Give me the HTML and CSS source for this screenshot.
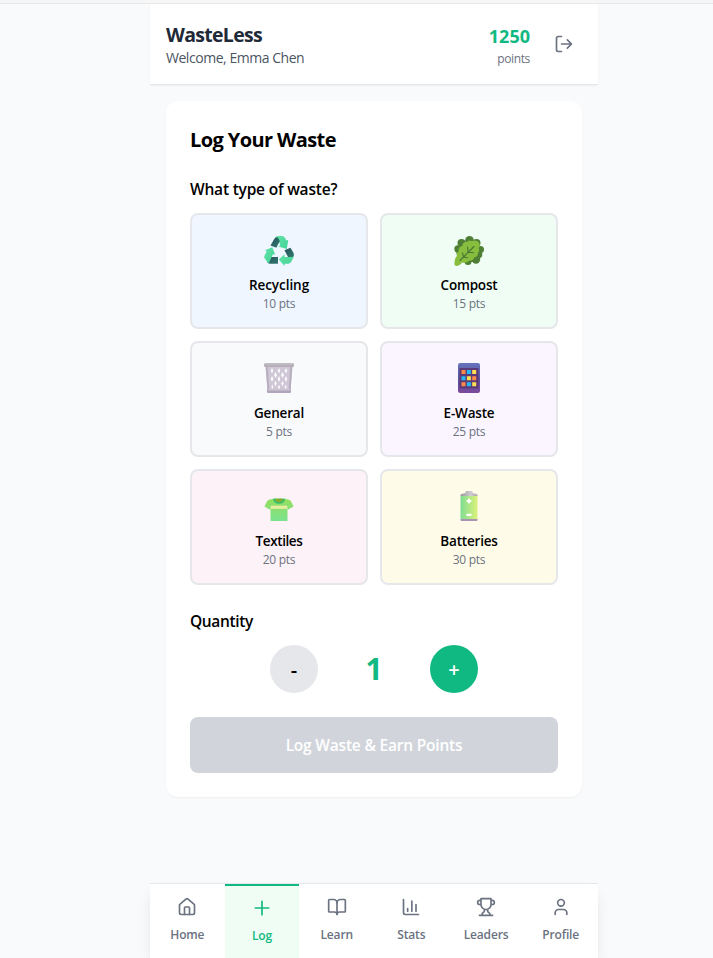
FILE: index.html
```html
<!DOCTYPE html>
<html lang="en">
<head>
<meta charset="utf-8">
<title>WasteLess</title>
<link rel="stylesheet" href="styles.css">
</head>
<body>
<div class="topline"></div>
<div class="app">
  <header class="header">
    <div>
      <h1 class="brand">WasteLess</h1>
      <p class="welcome">Welcome, Emma Chen</p>
    </div>
    <div class="account">
      <div class="score">
        <div class="score-value">1250</div>
        <div class="score-label">points</div>
      </div>
      <button class="logout" aria-label="Log out">
        <svg class="icon" viewBox="0 0 24 24"><path d="M9 21H5a2 2 0 0 1-2-2V5a2 2 0 0 1 2-2h4M16 17l5-5-5-5M21 12H9"/></svg>
      </button>
    </div>
  </header>

  <main class="main">
    <section class="card">
      <h2 class="title">Log Your Waste</h2>
      <h3 class="subtitle">What type of waste?</h3>
      <div class="types">
        <button class="type recycling">
          <svg class="emoji" viewBox="-1 -3 32 36">
            <defs>
              <linearGradient id="rd" x1="0" y1="0" x2="1" y2="1"><stop offset="0" stop-color="#264f5b"/><stop offset="1" stop-color="#317c70"/></linearGradient>
              <linearGradient id="rl" x1="0" y1="0" x2="1" y2="1"><stop offset="0" stop-color="#61e3a4"/><stop offset="1" stop-color="#43d39a"/></linearGradient>
            </defs>
            <path fill="url(#rl)" d="M11 1.500Q12 0 14 0h4q2 0 3 2l1.300 2.500 2-.8-1.500 9.300-8.500-2.600 2-1.200-1.800-5z"/>
            <path fill="url(#rd)" d="M6.500 9.600 10.200 3Q11.700.8 13.800 1.500L15.800 5l-3.400 6.800z"/>
            <path fill="url(#rd)" d="m20.500 14.300 6-2.600 3 5.300q1 2-.5 4.200l-5-.2z"/>
            <path fill="url(#rl)" d="m14.800 23.500 5.700-5.200v2.700h9.200l-2.500 4.800q-1 2-3.200 2H20.500V30z"/>
            <path fill="url(#rd)" d="M6 21h8v6.700H6q-2 0-3-2z"/>
            <path fill="url(#rl)" d="m1 14.300 7.300-3 3 7.400-2.300-.4-4.200 9q-1-.4-1.800-1.700L.7 22.500q-.9-1.500 0-3.200L2.700 15.500z"/>
          </svg>
          <span class="name">Recycling</span><span class="pts">10 pts</span>
        </button>
        <button class="type compost">
          <svg class="emoji" viewBox="-1 -3 32 36">
            <g fill="#4f7f35"><circle cx="15.500" cy="4.300" r="4.300"/><circle cx="7.500" cy="7" r="4"/><circle cx="4" cy="13" r="3.700"/><circle cx="22.500" cy="7" r="4"/><circle cx="26.500" cy="13.500" r="3.500"/><circle cx="24.500" cy="18.500" r="3.800"/><circle cx="22" cy="23.500" r="4.200"/><circle cx="14" cy="25.500" r="3.500"/><path d="M2 14h20v12H4z"/></g>
            <path fill="#88bd3d" d="M.3 28.200 1 23q.8-2 2-3-.8-3 1.700-5-.5-4 3.600-5 .2-4 4.700-4 1.500-2.500 4.500-1 5-1.500 7.300 1.500 2 3-.2 5.500 1.500 3-.7 4.700.3 4-3.700 4.800-1 3.500-5 3.300-3 3-7 1.700Q6 29.500 3 30 .5 30 .3 28.200z"/>
            <path fill="none" stroke="#477636" stroke-width="1.100" stroke-linecap="round" d="M6 24.500 20 10.500M9.500 21l-1-4M9.500 21l4.200.7M14.200 16.300 13.500 11M14.200 16.300l5.500.4"/>
          </svg>
          <span class="name">Compost</span><span class="pts">15 pts</span>
        </button>
        <button class="type general">
          <svg class="emoji" viewBox="-1 -3 32 36">
            <path fill="#cfc6d6" d="M1.500 3.500h27l-2 24h-23z"/>
            <g fill="#fafbfc"><path d="m8 5 1.300 2.800L8 10.600 6.700 7.800zM15 5l1.300 2.800L15 10.600l-1.300-2.800zM22 5l1.300 2.800-1.300 2.800-1.300-2.800zM11.500 9l1.500 3-1.500 3L10 12zM18.500 9l1.500 3-1.500 3-1.500-3zM8 13l1.400 3L8 19l-1.300-3zM15 13l1.400 3-1.400 3-1.400-3zM22 13l1.300 3-1.300 3-1.400-3zM11.500 18l1.300 2.600-1.300 2.600-1.300-2.600zM18.500 18l1.300 2.600-1.300 2.600-1.300-2.600zM8.300 21.500l1 2.400-1 2.300-1-2.300zM15 22l1.200 2.100L15 26.200l-1.200-2.100zM21.700 21.500l1 2.400-1 2.300-1-2.300z"/></g>
            <path fill="none" stroke="#b7afc0" stroke-width="2" d="m2.700 4 1.700 23M27.300 4l-1.700 23"/>
            <rect width="30" height="4" rx="1.500" fill="#b6afb9"/><rect x="1" y=".4" width="28" height="1.200" rx=".6" fill="#cbc7cc"/>
            <rect x="3" y="26" width="24" height="4" rx="1" fill="#b0a5bd"/><path fill="#cbc6ce" d="M4 26h22v1.500H4z"/>
          </svg>
          <span class="name">General</span><span class="pts">5 pts</span>
        </button>
        <button class="type ewaste">
          <svg class="emoji" viewBox="-1 -3 32 36">
            <defs><linearGradient id="ph" x1="0" y1="0" x2="0" y2="1"><stop offset="0" stop-color="#6473bd"/><stop offset=".6" stop-color="#5f4e98"/><stop offset="1" stop-color="#7c4a9e"/></linearGradient></defs>
            <rect x="4" width="22" height="30" rx="2.200" fill="url(#ph)"/>
            <path fill="#5c3a78" d="M5.500 5h19v20.500h-19z"/>
            <g fill="#ff8a48"><path d="M7.500 7h4v4h-4zM18.200 13.200h4v4h-4zM7.500 19.300h4v4h-4z"/></g>
            <g fill="#24b8f5"><path d="M12.900 7h4v4h-4zM7.500 13.200h4v4h-4zM12.900 19.300h4v4h-4z"/></g>
            <g fill="#ffdf53"><path d="M18.200 7h4v4h-4zM12.900 13.200h4v4h-4zM18.200 19.300h4v4h-4z"/></g>
          </svg>
          <span class="name">E-Waste</span><span class="pts">25 pts</span>
        </button>
        <button class="type textiles">
          <svg class="emoji" viewBox="-1 -3 32 36">
            <defs><linearGradient id="sh" x1="0" y1="0" x2="0" y2="1"><stop offset="0" stop-color="#94df5d"/><stop offset="1" stop-color="#7be28f"/></linearGradient></defs>
            <path fill="url(#sh)" d="M9 7.700h12l4 1q1.500.5 2.100 1.800L29.500 15.500l-5 3-1-1V30h-17V17.500l-1 1-5-3L2.900 10.500q.6-1.300 2.100-1.800z"/>
            <path fill="#5fcf78" d="m6.500 13-1 5.500 1-1.500zM23.500 13l1 5.500-1-1.500z"/>
            <path fill="#e9eda0" d="M6.500 14.700h17v3.100h-17z"/>
            <path fill="#35bd71" d="M9 7.700h12q-.5 5-6 5t-6-5z"/><path fill="#85ad2d" d="M10.700 7.700h8.600q-.8 3.500-4.300 3.500t-4.300-3.500z"/>
          </svg>
          <span class="name">Textiles</span><span class="pts">20 pts</span>
        </button>
        <button class="type batteries">
          <svg class="emoji" viewBox="-1 -3 32 36">
            <defs>
              <linearGradient id="bt"><stop offset="0" stop-color="#80dc93"/><stop offset="1" stop-color="#dcf27b"/></linearGradient>
              <linearGradient id="bm"><stop offset="0" stop-color="#9a969a"/><stop offset=".6" stop-color="#d0cdd0"/><stop offset="1" stop-color="#aaa6aa"/></linearGradient>
            </defs>
            <path fill="url(#bm)" d="M11.500 1q0-1 1.200-1h4.600q1.200 0 1.200 1v1l4 1q1 .3 1 1.300v1.200h-17V4.300q0-1 1-1.300l4-1z"/>
            <path fill="url(#bt)" d="M6.500 5h17v23h-17z"/>
            <path fill="#a995b3" d="M6.500 28h17v1q0 1-1 1h-15q-1 0-1-1z"/>
            <path stroke="#fff" stroke-width="2.200" stroke-linecap="round" d="M15 8.500v3M13.500 10h3M13.300 23.800h3.400"/>
          </svg>
          <span class="name">Batteries</span><span class="pts">30 pts</span>
        </button>
      </div>

      <h3 class="subtitle quantity-label">Quantity</h3>
      <div class="quantity">
        <button class="step minus">-</button>
        <span class="count">1</span>
        <button class="step plus">+</button>
      </div>
      <button class="submit">Log Waste &amp; Earn Points</button>
    </section>
  </main>

  <nav class="nav">
    <a class="tab"><svg class="icon" viewBox="0 0 24 24"><path d="M15 21v-8a1 1 0 0 0-1-1h-4a1 1 0 0 0-1 1v8"/><path d="M3 10a2 2 0 0 1 .709-1.528l7-5.999a2 2 0 0 1 2.582 0l7 5.999A2 2 0 0 1 21 10v9a2 2 0 0 1-2 2H5a2 2 0 0 1-2-2z"/></svg><span>Home</span></a>
    <a class="tab active"><svg class="icon" viewBox="0 0 24 24"><path d="M4 12h16M12 4v16"/></svg><span>Log</span></a>
    <a class="tab"><svg class="icon" viewBox="0 0 24 24"><path d="M12 7v14"/><path d="M3 18a1 1 0 0 1-1-1V4a1 1 0 0 1 1-1h5a4 4 0 0 1 4 4 4 4 0 0 1 4-4h5a1 1 0 0 1 1 1v13a1 1 0 0 1-1 1h-6a3 3 0 0 0-3 3 3 3 0 0 0-3-3z"/></svg><span>Learn</span></a>
    <a class="tab"><svg class="icon" viewBox="0 0 24 24"><path d="M3 3v16a2 2 0 0 0 2 2h16M18 17V9M13 17V5M8 17v-3"/></svg><span>Stats</span></a>
    <a class="tab"><svg class="icon" viewBox="0 0 24 24"><path d="M6 9H4.500a2.500 2.500 0 0 1 0-5H6M18 9h1.500a2.500 2.500 0 0 0 0-5H18M4 22h16M10 14.660V17c0 .55-.47.98-.97 1.210C7.850 18.750 7 20.240 7 22M14 14.660V17c0 .55.47.98.97 1.210C16.150 18.750 17 20.240 17 22M18 2H6v7a6 6 0 0 0 12 0V2Z"/></svg><span>Leaders</span></a>
    <a class="tab"><svg class="icon" viewBox="0 0 24 24"><path d="M19 21v-2a4 4 0 0 0-4-4H9a4 4 0 0 0-4 4v2"/><circle cx="12" cy="7" r="4"/></svg><span>Profile</span></a>
  </nav>
</div>
</body>
</html>
```
FILE: styles.css
```css
* { box-sizing: border-box; margin: 0; }

body {
  display: flex;
  flex-direction: column;
  height: 958px;
  overflow: hidden;
  background: #f9fafb;
  color: #000;
  font-family: "Segoe UI", "Open Sans", "Noto Sans", sans-serif;
}

button { padding: 0; border: 0; background: none; font: inherit; color: inherit; }

.topline { flex: none; height: 4px; background: #f6f6f6; border-bottom: 1px solid #e8e8e9; }

.app { display: flex; flex: 1; flex-direction: column; width: 448px; margin-left: 150px; }

.icon {
  display: block;
  width: 20px;
  height: 20px;
  fill: none;
  stroke: currentColor;
  stroke-width: 2;
  stroke-linecap: round;
  stroke-linejoin: round;
}

.header {
  display: flex;
  align-items: center;
  justify-content: space-between;
  height: 81px;
  padding: 0 16px;
  background: #fff;
  border-bottom: 1px solid #e5e7eb;
  box-shadow: 0 1px 2px rgba(0, 0, 0, .05);
}
.brand { height: 28px; font-size: 19.5px; line-height: 30px; font-weight: 700; color: #1f2937; letter-spacing: -.7px; }
.welcome { font-size: 14px; line-height: 20px; color: #4b5563; letter-spacing: -.46px; }
.account { display: flex; align-items: center; gap: 16px; }
.score { text-align: right; }
.score-value { font-size: 18px; line-height: 28px; font-weight: 700; color: #10b981; }
.score-label { height: 16px; font-size: 12px; line-height: 17px; color: #6b7280; letter-spacing: -.35px; }
.logout { padding: 8px; color: #6b7280; }

.main { flex: 1; padding: 16px; }
.card {
  padding: 24px;
  background: #fff;
  border-radius: 12px;
  box-shadow: 0 1px 2px rgba(0, 0, 0, .05);
}
.title { height: 28px; margin-bottom: 24px; font-size: 20px; line-height: 30px; font-weight: 700; letter-spacing: -.6px; }
.subtitle { margin-bottom: 12px; font-size: 15.5px; line-height: 24px; font-weight: 600; letter-spacing: -.2px; }
.quantity-label { letter-spacing: -.35px; }

.types { display: grid; grid-template-columns: 1fr 1fr; gap: 12px; margin-bottom: 24px; }
.type {
  display: flex;
  flex-direction: column;
  align-items: center;
  height: 116px;
  padding: 16px;
  border: 2px solid #e5e7eb;
  border-radius: 8px;
}
.recycling { background: #eff6ff; }
.compost { background: #f0fdf4; }
.general { background: #f9fafb; }
.ewaste { background: #faf5ff; }
.textiles { background: #fdf2f8; }
.batteries { background: #fefce8; }
.emoji { width: 32px; height: 36px; margin: 1px 0 7px; }
.recycling .emoji, .compost .emoji { margin: 2px 0 6px; }
.name { font-size: 13.5px; line-height: 20px; font-weight: 600; letter-spacing: -.2px; }
.recycling .name { letter-spacing: -.05px; }
.textiles .name { letter-spacing: -.4px; }
.pts { height: 16px; font-size: 12px; line-height: 18px; color: #6b7280; letter-spacing: -.3px; }

.quantity { display: flex; align-items: center; justify-content: center; gap: 24px; margin-bottom: 24px; }
.step { width: 48px; height: 48px; padding-top: 1px; border-radius: 50%; font-size: 20px; font-weight: 600; }
.minus { background: #e5e7eb; }
.plus { background: #10b981; color: #fff; }
.count { width: 64px; text-align: center; font-size: 30px; line-height: 36px; font-weight: 700; color: #10b981; }
.submit {
  display: block;
  width: 100%;
  height: 56px;
  border-radius: 8px;
  background: #d1d5db;
  color: #fff;
  font-size: 15.5px;
  font-weight: 600;
  line-height: 24px;
  letter-spacing: -.2px;
}

.nav {
  display: flex;
  flex: none;
  height: 75px;
  background: #fff;
  border-top: 1px solid #e5e7eb;
  box-shadow: 0 10px 15px -3px rgba(0, 0, 0, .1), 0 4px 6px -4px rgba(0, 0, 0, .1);
}
.tab {
  display: flex;
  flex: 1 1 0;
  flex-direction: column;
  align-items: center;
  justify-content: center;
  gap: 10px;
  padding-bottom: 2px;
  color: #6b7280;
  font-size: 12px;
  line-height: 16px;
  font-weight: 600;
  letter-spacing: -.15px;
}
.active { border-top: 2px solid #10b981; background: #f0fdf4; color: #10b981; }
```
